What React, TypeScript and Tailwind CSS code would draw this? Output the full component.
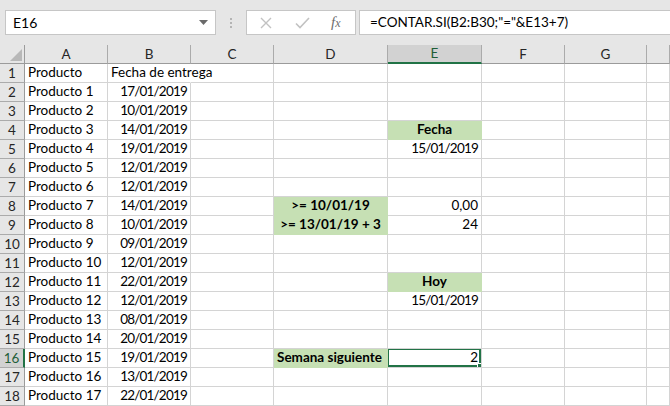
import React from 'react';

const DATES = [
  '17/01/2019', '10/01/2019', '14/01/2019', '19/01/2019', '12/01/2019', '12/01/2019',
  '14/01/2019', '10/01/2019', '09/01/2019', '12/01/2019', '22/01/2019', '12/01/2019',
  '08/01/2019', '20/01/2019', '19/01/2019', '13/01/2019', '22/01/2019',
];

const COLS = ['A', 'B', 'C', 'D', 'E', 'F', 'G', ''];

type CellSpec = {
  text?: string;
  align?: 'left' | 'right' | 'center';
  bold?: boolean;
  fill?: boolean;
  overflow?: boolean;
};

// content of the sheet, keyed by cell address
const sheet: Record<string, CellSpec> = {
  A1: { text: 'Producto' },
  B1: { text: 'Fecha de entrega', overflow: true },
  E4: { text: 'Fecha', align: 'center', bold: true, fill: true },
  E5: { text: '15/01/2019', align: 'right' },
  D8: { text: '>= 10/01/19', align: 'center', bold: true, fill: true },
  E8: { text: '0,00', align: 'right' },
  D9: { text: '>= 13/01/19 + 3', align: 'center', bold: true, fill: true },
  E9: { text: '24', align: 'right' },
  E12: { text: 'Hoy', align: 'center', bold: true, fill: true },
  E13: { text: '15/01/2019', align: 'right' },
  D16: { text: 'Semana siguiente', bold: true, fill: true },
  E16: { text: '2', align: 'right' },
};
DATES.forEach((d, i) => {
  sheet[`A${i + 2}`] = { text: `Producto ${i + 1}` };
  sheet[`B${i + 2}`] = { text: d, align: 'right' };
});

const Cell: React.FC<{ addr: string }> = ({ addr }) => {
  const c = sheet[addr] || {};
  const selected = addr === 'E16';
  const isDate = !!c.text && /^\d\d\/\d\d\/\d{4}$/.test(c.text);
  const justify =
    c.align === 'right' ? 'justify-end' : c.align === 'center' ? 'justify-center' : 'justify-start';
  return (
    <div
      className={`relative h-[19px] flex items-end px-[3px] pb-[1px] border-r border-b whitespace-nowrap ${justify} ${
        c.fill ? 'bg-[#c6e0b4] border-[#c6e0b4]' : 'bg-white border-[#d4d4d4]'
      } ${c.overflow ? 'border-r-white z-10 overflow-visible' : 'overflow-hidden'} ${
        c.bold ? 'font-bold' : ''
      }`}
    >
      <span className={`leading-[17px] ${isDate ? 'tracking-[-0.8px]' : ''}`}>{c.text}</span>
      {selected && (
        <div className="absolute -left-px -top-px w-[calc(100%+1px)] h-[calc(100%+1px)] border-2 border-[#217346]">
          <div className="absolute -right-[4px] -bottom-[4px] w-[6px] h-[6px] bg-[#217346] border border-white" />
        </div>
      )}
    </div>
  );
};

const App: React.FC = () => {
  return (
    <div className="w-[670px] h-[406px] overflow-hidden bg-white font-['Lato',sans-serif] text-[13.5px] text-black">
      {/* formula bar */}
      <div className="h-[45px] bg-[#e6e6e6] flex items-start pt-[10px] pl-[5px]">
        <div className="w-[211px] h-[25px] bg-white border border-[#c6c6c6] flex items-center justify-between pl-[7px] pr-[7px]">
          <span className="text-[14px]">E16</span>
          <svg width="9" height="5" viewBox="0 0 9 5">
            <path d="M0 0h9L4.5 5z" fill="#6a6a6a" />
          </svg>
        </div>
        <div className="w-[30px] h-[25px] flex flex-col items-center justify-center gap-[2px]">
          <div className="w-[2px] h-[2px] bg-[#b4b4b4]" />
          <div className="w-[2px] h-[2px] bg-[#b4b4b4]" />
          <div className="w-[2px] h-[2px] bg-[#b4b4b4]" />
        </div>
        <div className="w-[110px] h-[25px] bg-white border border-[#c6c6c6] flex items-center">
          <svg className="ml-[12px]" width="14" height="14" viewBox="0 0 14 14">
            <path d="M2 2l10 10M12 2L2 12" stroke="#c2c2c2" strokeWidth="1.4" fill="none" />
          </svg>
          <svg className="ml-[22px]" width="15" height="12" viewBox="0 0 15 12">
            <path d="M1 6.5l4 4L14 1" stroke="#c2c2c2" strokeWidth="1.6" fill="none" />
          </svg>
          <span className="ml-[21px] text-[15px] italic text-[#6d6d6d] font-['Liberation_Serif',serif]">
            f<span className="text-[12px]">x</span>
          </span>
        </div>
        <div className="ml-[3px] flex-1 h-[25px] bg-white border border-r-0 border-[#c6c6c6] flex items-center pl-[10px]">
          <span>=CONTAR.SI(B2:B30;"="&amp;E13+7)</span>
        </div>
      </div>

      {/* grid */}
      <div className="grid grid-cols-[25px_83px_83px_83px_114px_94px_83px_82px_1fr]">
        {/* column headers */}
        <div className="h-[19px] bg-[#e6e6e6] border-r border-b border-[#9b9b9b] flex items-end justify-end pr-[2px] pb-[2px]">
          <svg width="12" height="12" viewBox="0 0 12 12">
            <path d="M12 0V12H0z" fill="#b8b8b8" />
          </svg>
        </div>
        {COLS.map((col) => (
          <div
            key={col || 'H'}
            className={`h-[19px] flex items-center justify-center border-r text-[13.5px] ${
              col === 'E'
                ? 'bg-[#d2d2d2] border-b-2 border-b-[#217346] border-r-[#ababab] text-[#1e5e38]'
                : 'bg-[#e6e6e6] border-b border-b-[#9b9b9b] border-r-[#ababab] text-[#262626]'
            }`}
          >
            {col}
          </div>
        ))}

        {Array.from({ length: 18 }, (_, i) => i + 1).map((r) => (
          <React.Fragment key={r}>
            <div
              className={`h-[19px] flex items-center justify-center border-b text-[13.5px] ${
                r === 16
                  ? 'bg-[#d2d2d2] border-r-2 border-r-[#217346] border-b-[#ababab] text-[#1e5e38]'
                  : 'bg-[#e6e6e6] border-r border-r-[#9b9b9b] border-b-[#ababab] text-[#262626]'
              }`}
            >
              {r}
            </div>
            {COLS.map((col) => (
              <Cell key={col + r} addr={`${col || 'H'}${r}`} />
            ))}
          </React.Fragment>
        ))}
      </div>
    </div>
  );
};

export default App;
